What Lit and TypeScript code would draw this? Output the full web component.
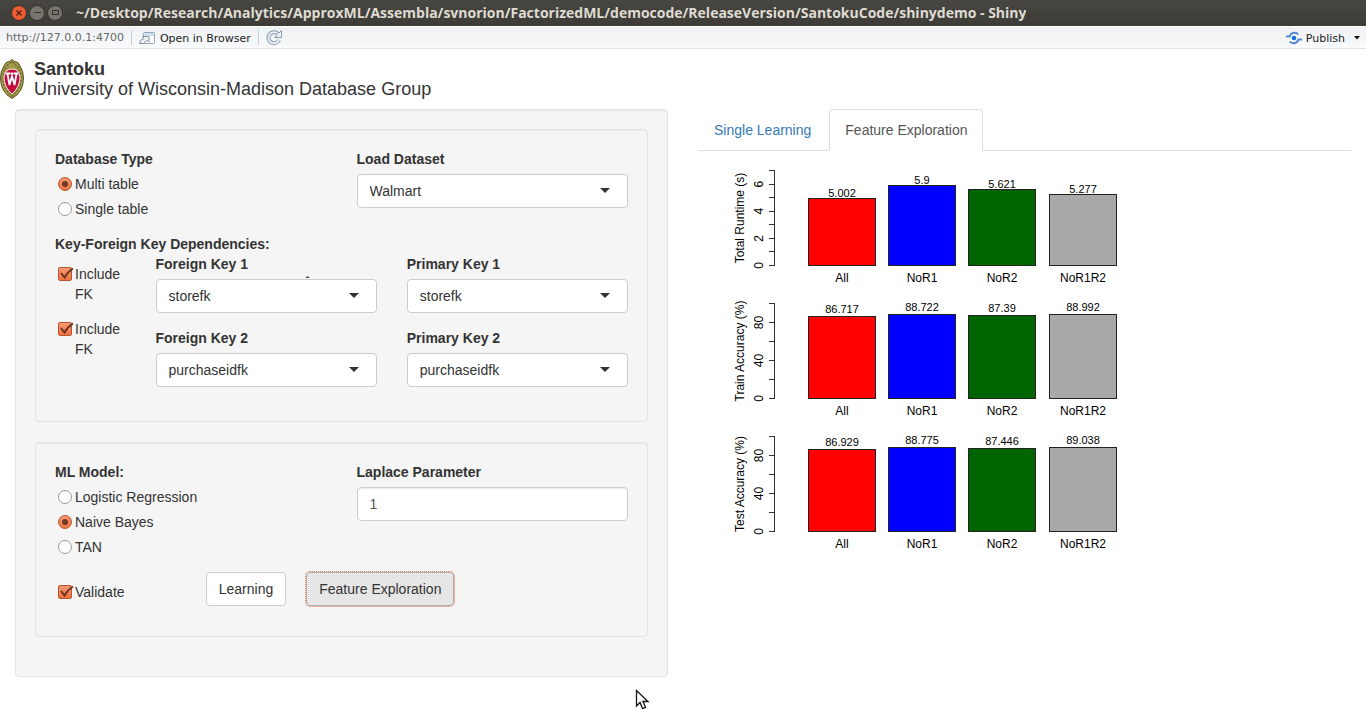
import { LitElement, html, svg, css } from "lit";
import { customElement, property } from "lit/decorators.js";

interface ChartData {
  label: string;
  max: number;
  step: number;
  labelEvery: number;
  gap: number;
  values: number[];
}

const CATEGORIES = ["All", "NoR1", "NoR2", "NoR1R2"];
const FILLS = ["#ff0000", "#0000ff", "#006400", "#a9a9a9"];

const CHARTS: ChartData[] = [
  { label: "Total Runtime (s)", max: 7, step: 1, labelEvery: 2, gap: 2, values: [5.002, 5.9, 5.621, 5.277] },
  { label: "Train Accuracy (%)", max: 100, step: 20, labelEvery: 2, gap: 4, values: [86.717, 88.722, 87.39, 88.992] },
  { label: "Test Accuracy (%)", max: 100, step: 20, labelEvery: 2, gap: 4, values: [86.929, 88.775, 87.446, 89.038] },
];

@customElement("bar-chart")
export class BarChart extends LitElement {
  @property({ attribute: false }) data!: ChartData;

  static styles = css`
    :host { display: block; }
    .plot { display: block; width: 430px; height: 133px; }
    .text { font-family: "Liberation Sans", Arial, sans-serif; font-size: 12px; fill: #000; text-anchor: middle; }
    .value { font-size: 11px; }
    .axis { stroke: #333; fill: none; }
    .bar { stroke: #222; }
  `;

  render() {
    const base = 114.5;
    const top = 19.5;
    const { max, step, labelEvery, gap, values, label } = this.data;
    const y = (v: number) => base - (v / max) * (base - top);
    const ticks = Array.from({ length: Math.round(max / step) + 1 }, (_, i) => i * step);
    return html`<svg class="plot" viewBox="0 0 430 133" role="img" aria-label=${label}>
      <path class="axis" d=${`M76.5 ${top}V${base}` + ticks.map((t) => `M71 ${Math.round(y(t) - 0.5) + 0.5}H77`).join("")}></path>
      ${ticks
        .filter((_, i) => i % labelEvery === 0)
        .map((t) => svg`<text class="text" transform=${`translate(65 ${y(t)}) rotate(-90)`}>${t}</text>`)}
      <text class="text" transform="translate(46 67) rotate(-90)">${label}</text>
      ${values.map((v, i) => {
        const x = Math.round(110 + i * 80.2) + 0.5;
        const h = Math.floor(base - y(v));
        return svg`<rect class="bar" x=${x} y=${base - h} width="67" height=${h} fill=${FILLS[i]}></rect>
          <text class="text value" x=${x + 33.5} y=${Math.round(base - h - gap)}>${v}</text>
          <text class="text" x=${x + 33.5} y="131">${CATEGORIES[i]}</text>`;
      })}
    </svg>`;
  }
}

@customElement("app-root")
export class AppRoot extends LitElement {
  static styles = css`
    :host {
      display: block;
      min-height: 100vh;
      background: #fff;
      color: #333;
      font: 14px/20px "Liberation Sans", Arial, sans-serif;
    }
    * { box-sizing: border-box; }
    input, select, button { font: inherit; color: inherit; margin: 0; }

    .titlebar {
      display: flex; align-items: center; height: 26px; padding-left: 11px;
      background: linear-gradient(#474640, #3c3b37);
    }
    .winbtns { display: flex; gap: 2px; }
    .winbtn { width: 16px; height: 16px; padding: 0; border: 0; background: none; }
    .winbtn svg { display: block; }
    .title {
      margin: 0 0 0 13px; color: #dfdbd2; white-space: nowrap; overflow: hidden;
      font: bold 14px/24px "Open Sans", "Noto Sans", sans-serif;
    }

    .toolbar {
      display: flex; align-items: center; height: 23px; padding: 0 5px 0 6px;
      border-bottom: 1px solid #e1e4ea; border-top: 1px solid #fff;
      background: linear-gradient(#eff2f4, #f8fafb);
      color: #222; font: 11px/20px "DejaVu Sans", sans-serif;
    }
    .url { color: #666; }
    .sep { width: 1px; height: 15px; margin: 0 7px; background: #c9ccd0; }
    .tool { display: flex; align-items: center; gap: 4px; padding: 2px 0 0; border: 0; background: none; line-height: 20px; }
    .tool svg { margin-bottom: 1px; }
    .publish { margin-left: auto; gap: 4px; }
    .more { margin-left: 7px; }

    .header { display: flex; gap: 10px; padding: 10px 0; }
    .heading { margin: 0; font-size: 18px; line-height: 20px; font-weight: normal; }
    .name { display: block; font-weight: bold; }

    .columns { display: grid; grid-template-columns: 1fr 1fr; gap: 30px; padding: 0 15px; align-items: start; }
    .well {
      margin: 0 0 20px; padding: 19px; border: 1px solid #e3e3e3; border-radius: 4px;
      background: #f5f5f5; box-shadow: inset 0 1px 1px rgba(0, 0, 0, 0.05);
    }
    .outer { margin-bottom: 0; }
    .grid { display: grid; grid-template-columns: repeat(12, minmax(0, 1fr)); column-gap: 30px; }
    .s2 { grid-column: span 2; }
    .s3 { grid-column: span 3; }
    .s5 { grid-column: span 5; }
    .s6 { grid-column: span 6; }
    .s7 { grid-column: span 7; }

    .group { margin: 0 0 15px; padding: 0; border: 0; min-width: 0; }
    .label { display: block; padding: 0; margin: 0 0 5px; font-weight: bold; }
    .subhead { margin: 0; font-weight: bold; }
    .choices { display: grid; gap: 5px; }
    .choice { display: flex; align-items: flex-start; gap: 3px; padding-left: 3px; }
    .includes { display: grid; gap: 15px; align-content: start; padding-top: 10px; }
    .validate { padding-top: 10px; margin-bottom: 15px; white-space: nowrap; }

    .mark {
      appearance: none; flex: none; position: relative; width: 14px; height: 14px; margin: 3px 0 0;
      border: 1px solid #9a9a9a; background: #fff;
    }
    .radio { border-radius: 50%; }
    .mark:checked { border-color: #b5552f; background: linear-gradient(#f99a72, #ef7342); }
    .radio:checked::after {
      content: ""; position: absolute; inset: 3px; border-radius: 50%; background: #6f3a26;
    }
    .check { border-radius: 2px; }
    .tickbox { position: relative; display: flex; flex: none; }
    .tick { position: absolute; left: 2px; top: 3px; pointer-events: none; }

    .control {
      display: block; width: 100%; height: 34px; padding: 0 12px;
      border: 1px solid #ccc; border-radius: 4px; background: #fff;
    }
    .picker { position: relative; }
    .picker .control { appearance: none; }
    .picker::after {
      content: ""; position: absolute; right: 18px; top: 14px; pointer-events: none;
      border: 5px solid transparent; border-top-color: #333; border-bottom: 0;
    }
    .number { color: #555; box-shadow: inset 0 1px 1px rgba(0, 0, 0, 0.08); }
    .anchor { position: relative; }
    .speck { position: absolute; left: 149px; top: 22px; }

    .btn { height: 34px; padding: 0 12px; border: 1px solid #ccc; border-radius: 4px; background: #fff; white-space: nowrap; }
    .pressed { background: #e6e6e6; border-color: #adadad; outline: 1px dotted #f07746; outline-offset: 0; }

    .tabs { display: flex; gap: 2px; border-bottom: 1px solid #ddd; }
    .tab {
      display: block; padding: 10px 15px; margin-bottom: -1px; border: 1px solid transparent;
      border-radius: 4px 4px 0 0; color: #337ab7; text-decoration: none;
    }
    .active { color: #555; background: #fff; border-color: #ddd #ddd #fff; }

    .pointer { position: fixed; left: 635px; top: 689px; }
  `;

  private radio(group: string, text: string, checked = false) {
    return html`<label class="choice"><input class="mark radio" type="radio" name=${group} ?checked=${checked} />${text}</label>`;
  }

  private check(text: string, extra = "") {
    return html`<label class="choice ${extra}">
      <span class="tickbox"><input class="mark check" type="checkbox" checked /><svg class="tick" width="15" height="13" viewBox="0 0 15 13"><path d="M1 6L4.500 10.500Q8 4.500 13 1.500" fill="none" stroke="#6b3422" stroke-width="2"></path></svg></span><span>${text}</span></label>`;
  }

  private picker(id: string, label: string, value: string) {
    return html`<div class="group">
      <label class="label" for=${id}>${label}</label>
      <div class="picker"><select class="control" id=${id}><option>${value}</option></select></div>
    </div>`;
  }

  render() {
    return html`
      <div class="titlebar">
        <div class="winbtns">
          <button class="winbtn" aria-label="Close"><svg width="16" height="16" viewBox="0 0 16 16"><circle cx="8" cy="8" r="7.500" fill="#ed5b31" stroke="#35332f"></circle><path d="M5.500 5.500l5 5m0-5l-5 5" stroke="#4a1f12" stroke-width="1.300"></path></svg></button>
          <button class="winbtn" aria-label="Minimize"><svg width="16" height="16" viewBox="0 0 16 16"><circle cx="8" cy="8" r="7.500" fill="#77746c" stroke="#35332f"></circle><path d="M5 7.500h7" stroke="#35332f"></path></svg></button>
          <button class="winbtn" aria-label="Maximize"><svg width="16" height="16" viewBox="0 0 16 16"><circle cx="8" cy="8" r="7.500" fill="#77746c" stroke="#35332f"></circle><rect x="5.500" y="5.500" width="6" height="4" fill="none" stroke="#35332f"></rect></svg></button>
        </div>
        <p class="title">~/Desktop/Research/Analytics/ApproxML/Assembla/svnorion/FactorizedML/democode/ReleaseVersion/SantokuCode/shinydemo - Shiny</p>
      </div>

      <div class="toolbar">
        <span class="url">http://127.0.0.1:4700</span>
        <span class="sep"></span>
        <button class="tool">
          <svg width="17" height="14" viewBox="0 0 17 14"><rect x="4.500" y="1.500" width="11" height="11" rx="1" fill="#fff" stroke="#93a4b8"></rect><path d="M5 2h10v3H5z" fill="#cfe2f5"></path><path d="M.5 12.500Q1 8 5 7.500L3.500 5.500H10V11L8 9.500Q5.500 10.500 5 12.500Z" fill="#f2f5f8" stroke="#8493a6"></path></svg>
          Open in Browser
        </button>
        <span class="sep"></span>
        <button class="tool" aria-label="Reload">
          <svg width="17" height="16" viewBox="0 0 17 16"><path d="M11.500 3.500A5.500 5.500 0 1 0 13 10" fill="none" stroke="#8798ad" stroke-width="4"></path><path d="M11.500 3.500A5.500 5.500 0 1 0 13 10" fill="none" stroke="#edf1f5" stroke-width="2"></path><path d="M8.500 7.500H15.500V.5L13 3 12 2.500 10.500 4.500 11 5.500Z" fill="#edf1f5" stroke="#8798ad"></path></svg>
        </button>
        <button class="tool publish">
          <svg width="16" height="14" viewBox="0 0 16 14"><circle cx="8" cy="7" r="2.300" fill="#1d6fe0"></circle><path d="M0 5.500H3.500Q5 1.800 8.500 1.800Q11 1.800 12.300 3.500M16 8.500H12.500Q11 12.200 7.500 12.200Q5 12.200 3.700 10.500" fill="none" stroke="#5589cf" stroke-width="2"></path></svg>
          Publish
        </button>
        <button class="tool more" aria-label="Publish options"><svg width="9" height="4" viewBox="0 0 9 4"><path d="M2 0h6L5 3.500z" fill="#111"></path></svg></button>
      </div>

      <header class="header">
        <svg width="24" height="40" viewBox="0 0 24 40" role="img" aria-label="University crest">
          <path d="M12 .5L14.500 2.500 18 3.500 20 7Q23.500 12 23.500 19Q23.500 33 12 39.500Q.5 33 .5 19Q.5 12 4 7L6 3.500 9.500 2.500Z" fill="#a49a4b" stroke="#55501f"></path>
          <path d="M12 3Q20 7 21 18Q21 30 12 37Q3 30 3 18Q4 7 12 3Z" fill="none" stroke="#6f682b" stroke-width="1.500" stroke-dasharray="2 1.500"></path>
          <path d="M12 10Q19 10 20 18Q20 28 12 35Q4 28 4 18Q5 10 12 10Z" fill="#c30b3e" stroke="#f5e9e3"></path>
          <path d="M5.500 14.500H10M10.500 14.500H13.500M14 14.500H18.500M7.500 15L9.500 26 12 17 14.500 26 16.500 15" fill="none" stroke="#fff" stroke-width="1.800"></path>
        </svg>
        <h1 class="heading"><span class="name">Santoku</span>University of Wisconsin-Madison Database Group</h1>
      </header>

      <main class="columns">
        <form class="well outer" @submit=${(e: Event) => e.preventDefault()}>
          <section class="well">
            <div class="grid">
              <fieldset class="group s6">
                <legend class="label">Database Type</legend>
                <div class="choices">${this.radio("db", "Multi table", true)}${this.radio("db", "Single table")}</div>
              </fieldset>
              <div class="s6">${this.picker("dataset", "Load Dataset", "Walmart")}</div>
            </div>
            <p class="subhead">Key-Foreign Key Dependencies:</p>
            <div class="grid">
              <div class="s2 includes">${this.check("Include FK")}${this.check("Include FK")}</div>
              <div class="s5 anchor">
                ${this.picker("fk1", "Foreign Key 1", "storefk")}${this.picker("fk2", "Foreign Key 2", "purchaseidfk")}
                <svg class="speck" width="5" height="2" viewBox="0 0 5 2"><path d="M0 2L2.500 0 5 2z" fill="#555"></path></svg>
              </div>
              <div class="s5">${this.picker("pk1", "Primary Key 1", "storefk")}${this.picker("pk2", "Primary Key 2", "purchaseidfk")}</div>
            </div>
          </section>

          <section class="well">
            <div class="grid">
              <fieldset class="group s6">
                <legend class="label">ML Model:</legend>
                <div class="choices">
                  ${this.radio("ml", "Logistic Regression")}${this.radio("ml", "Naive Bayes", true)}${this.radio("ml", "TAN")}
                </div>
              </fieldset>
              <div class="group s6">
                <label class="label" for="laplace">Laplace Parameter</label>
                <input class="control number" id="laplace" type="text" inputmode="numeric" value="1" />
              </div>
            </div>
            <div class="grid">
              <div class="s3">${this.check("Validate", "validate")}</div>
              <div class="s2"><button class="btn" type="button">Learning</button></div>
              <div class="s7"><button class="btn pressed" type="button">Feature Exploration</button></div>
            </div>
          </section>
        </form>

        <section>
          <nav class="tabs">
            <a class="tab" href="#single">Single Learning</a>
            <a class="tab active" href="#feature" aria-current="page">Feature Exploration</a>
          </nav>
          ${CHARTS.map((c) => html`<bar-chart .data=${c}></bar-chart>`)}
        </section>
      </main>

      <svg class="pointer" width="15" height="21" viewBox="0 0 15 21" aria-hidden="true"><path d="M1.500 1.500V17L5 13.500 7.500 19.500 10.500 18.500 8 12.500H13Z" fill="#fff" stroke="#111" stroke-width="1.300"></path></svg>
    `;
  }
}
